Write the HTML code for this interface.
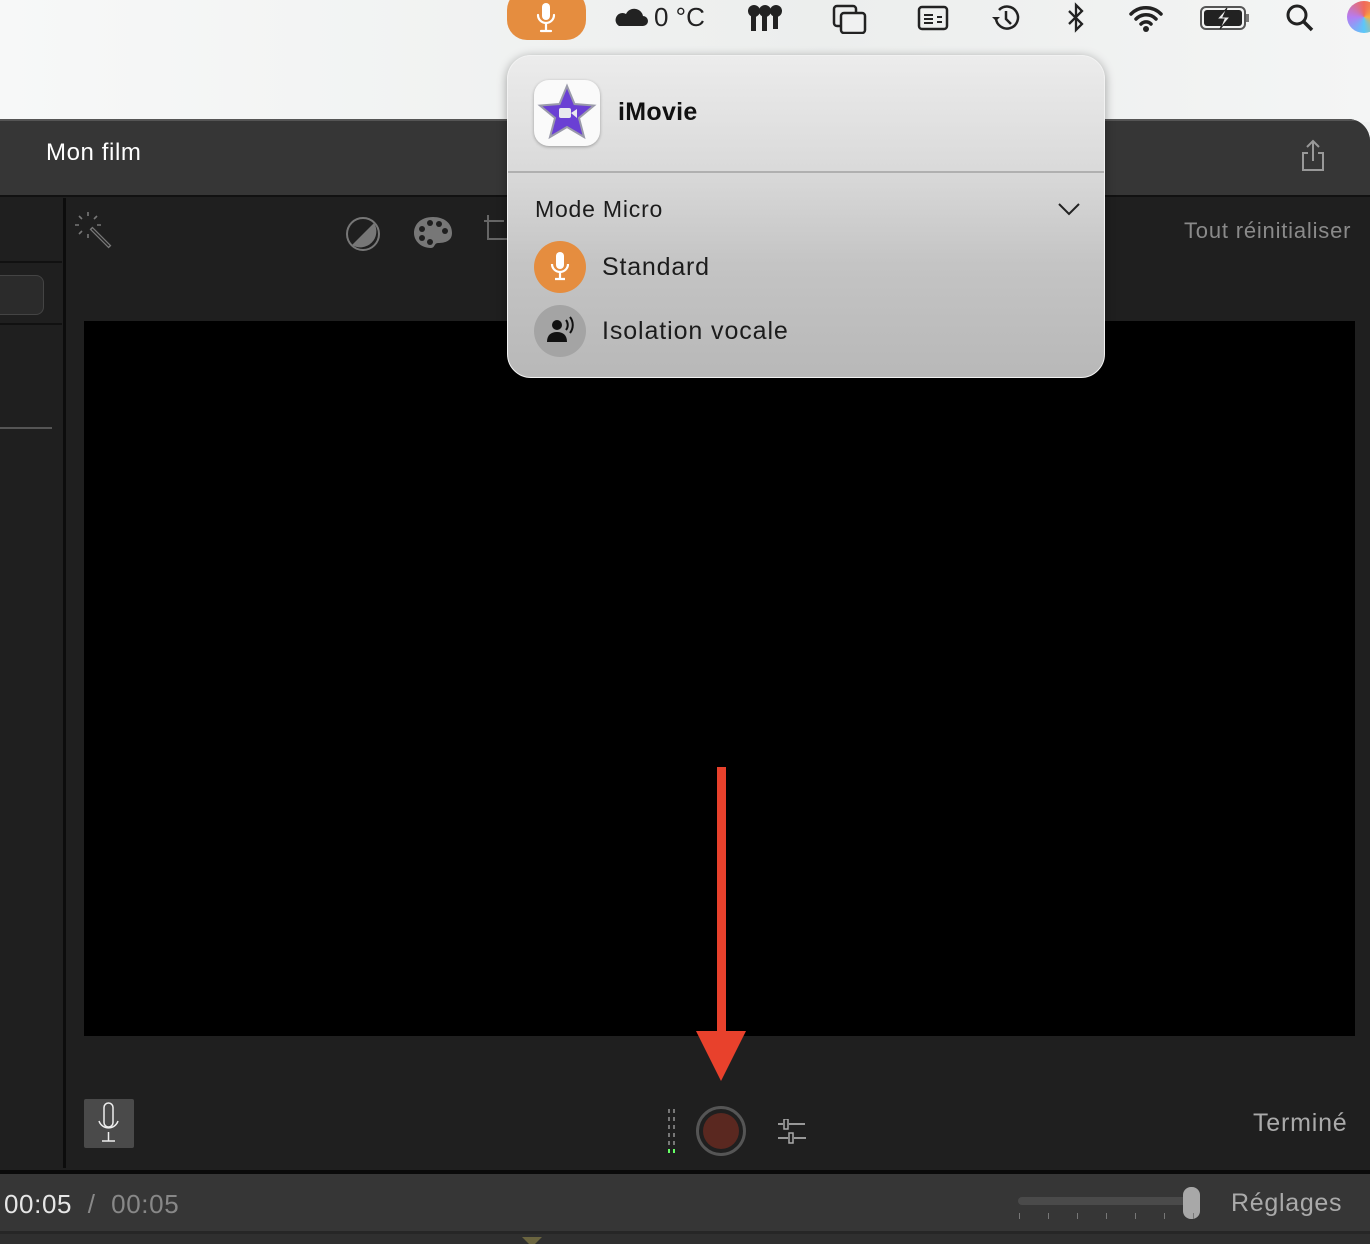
<!DOCTYPE html>
<html><head><meta charset="utf-8"><style>
*{margin:0;padding:0;box-sizing:border-box}
body{width:1370px;height:1244px;overflow:hidden;position:relative;background:#f0f1f1;font-family:"Liberation Sans","DejaVu Sans",sans-serif}
.a{position:absolute}
</style></head><body>
<div class="a" style="left:0;top:0;width:1370px;height:122px;background:linear-gradient(90deg,#f7f8f8,#eceeed 60%,#f4f5f5)"></div>
<div class="a" style="left:507px;top:-10px;width:79px;height:50px;border-radius:20px;background:#e58d3f"></div>
<svg class="a" style="left:533px;top:2px" width="26" height="32" viewBox="0 0 26 32"><rect x="9" y="1" width="8" height="17" rx="4" fill="#fff"/><path d="M5 13a8 8 0 0016 0M13 21v7M8 29h10" stroke="#fff" stroke-width="2.2" fill="none" stroke-linecap="round"/></svg>
<svg class="a" style="left:615px;top:6px" width="34" height="22"><path d="M4 20h24a5 5 0 000-10 9 9 0 00-17-2 6 6 0 00-7 12z" fill="#222"/></svg>
<div class="a" style="left:654px;top:2px;font-size:26px;color:#222">0 °C</div>
<svg class="a" style="left:746px;top:3px" width="38" height="30"><g fill="#222"><circle cx="8" cy="8" r="6"/><circle cx="19" cy="8" r="6"/><circle cx="30" cy="8" r="6"/><rect x="5" y="8" width="5" height="20"/><rect x="16" y="8" width="5" height="20"/><rect x="27" y="8" width="5" height="18"/></g></svg>
<svg class="a" style="left:832px;top:4px" width="36" height="30"><rect x="2" y="2" width="22" height="20" rx="3" fill="none" stroke="#222" stroke-width="2.5"/><rect x="9" y="9" width="24" height="20" rx="3" fill="#f0f1f1" stroke="#222" stroke-width="2.5"/></svg>
<svg class="a" style="left:917px;top:5px" width="32" height="26"><rect x="2" y="2" width="28" height="22" rx="3" fill="none" stroke="#222" stroke-width="2.5"/><path d="M7 10h9M7 14h9M7 18h9M20 12h5M20 17h5" stroke="#222" stroke-width="2"/></svg>
<svg class="a" style="left:990px;top:3px" width="32" height="30"><path d="M6 15a11 11 0 1 0 3-8" fill="none" stroke="#222" stroke-width="2.5"/><path d="M2 14l4 4 4-4z" fill="#222"/><path d="M16 8v8l5 5" stroke="#222" stroke-width="2.5" fill="none"/></svg>
<svg class="a" style="left:1065px;top:2px" width="22" height="32"><path d="M4 9l13 13-6 6V3l6 6L4 22" stroke="#222" stroke-width="2.3" fill="none"/></svg>
<svg class="a" style="left:1128px;top:4px" width="36" height="28"><path d="M3 10a21 21 0 0130 0M8 15a14 14 0 0120 0M13 20a7 7 0 0110 0" stroke="#222" stroke-width="3.5" fill="none" stroke-linecap="round"/><circle cx="18" cy="25" r="3" fill="#222"/></svg>
<svg class="a" style="left:1199px;top:5px" width="52" height="26"><rect x="2" y="2" width="44" height="22" rx="5" fill="none" stroke="#555" stroke-width="2"/><rect x="5" y="5" width="38" height="16" rx="3" fill="#222"/><rect x="47" y="9" width="3" height="8" fill="#777"/><path d="M28 3l-10 11h7l-4 10 10-12h-7z" fill="#eee" stroke="#222" stroke-width="1"/></svg>
<svg class="a" style="left:1285px;top:3px" width="30" height="30"><circle cx="12" cy="12" r="9" fill="none" stroke="#222" stroke-width="3"/><path d="M19 19l8 8" stroke="#222" stroke-width="3.5"/></svg>
<div class="a" style="left:1347px;top:1px;width:34px;height:32px;border-radius:50%;background:conic-gradient(#f06a5a,#f9b23c,#5ac8fa,#b57cf2,#f06a5a)"></div>
<div class="a" style="left:0;top:119px;width:1370px;height:1125px;background:#1f1f1f;border-top-right-radius:22px;overflow:hidden">
 <div class="a" style="left:0;top:0;width:1370px;height:77px;background:#363636;border-top:2px solid #555"></div>
 <div class="a" style="left:0;top:76px;width:1370px;height:2px;background:#111"></div>
 <div class="a" style="left:46px;top:20px;font-size:24px;letter-spacing:0.6px;color:#fff">Mon film</div>
 <svg class="a" style="left:1298px;top:20px" width="30" height="34"><path d="M15 2v20M9 8l6-6 6 6M10 14H5v17h20V14h-5" stroke="#999" stroke-width="2" fill="none"/></svg>
 <div class="a" style="left:1184px;top:99px;font-size:22px;letter-spacing:0.8px;color:#8a8a8a">Tout réinitialiser</div>
 <div class="a" style="left:63px;top:79px;width:3px;height:970px;background:#0c0c0c"></div>
 <div class="a" style="left:0;top:142px;width:62px;height:2px;background:#111"></div>
 <div class="a" style="left:0;top:204px;width:62px;height:2px;background:#111"></div>
 <div class="a" style="left:-10px;top:156px;width:54px;height:40px;border-radius:8px;background:#2b2b2b;border:1px solid #444"></div>
 <div class="a" style="left:0;top:308px;width:52px;height:2px;background:#555"></div>
 <svg class="a" style="left:72px;top:90px" width="42" height="42"><g stroke="#777" stroke-width="1.6"><path d="M16 3v4M16 25v4M3 16h4M25 16h4M7 7l3 3M25 7l-3 3M7 25l3-3"/></g><path d="M19 19l19 19" stroke="#777" stroke-width="4"/><path d="M20 20l17 17" stroke="#222" stroke-width="1.5"/></svg>
 <svg class="a" style="left:344px;top:96px" width="38" height="38"><circle cx="19" cy="19" r="16" fill="none" stroke="#777" stroke-width="2"/><path d="M30 8A16 16 0 0 1 8 30z" fill="#777"/></svg>
 <svg class="a" style="left:412px;top:96px" width="42" height="36"><path d="M21 2C8 2 2 10 2 18s7 15 17 15c4 0 3-5 7-5 7 0 14-2 14-10C40 8 32 2 21 2z" fill="#777"/><g fill="#1f1f1f"><circle cx="10" cy="14" r="3"/><circle cx="18" cy="8" r="3"/><circle cx="27" cy="9" r="3"/><circle cx="10" cy="23" r="3"/><circle cx="18" cy="27" r="3"/><circle cx="33" cy="16" r="3"/></g></svg>
 <svg class="a" style="left:484px;top:96px" width="24" height="30"><path d="M4 0v24h20M0 6h20" stroke="#666" stroke-width="2" fill="none"/></svg>
 <div class="a" style="left:84px;top:202px;width:1271px;height:715px;background:#000"></div>
 <div class="a" style="left:84px;top:980px;width:50px;height:49px;background:#4a4a4a;border-radius:2px"></div>
 <svg class="a" style="left:94px;top:982px" width="30" height="44"><rect x="10" y="2" width="9" height="24" rx="4.5" fill="none" stroke="#eee" stroke-width="1.5"/><path d="M5 20a10 10 0 0019 0M14.5 31v9M8 40h13" stroke="#eee" stroke-width="1.5" fill="none"/></svg>
 <svg class="a" style="left:666px;top:988px" width="14" height="50"><g fill="#777"><rect x="2" y="2" width="2" height="4"/><rect x="7" y="2" width="2" height="4"/><rect x="2" y="10" width="2" height="4"/><rect x="7" y="10" width="2" height="4"/><rect x="2" y="18" width="2" height="4"/><rect x="7" y="18" width="2" height="4"/><rect x="2" y="26" width="2" height="4"/><rect x="7" y="26" width="2" height="4"/><rect x="2" y="34" width="2" height="4"/><rect x="7" y="34" width="2" height="4"/></g><rect x="2" y="42" width="2" height="4" fill="#6f6"/><rect x="7" y="42" width="2" height="4" fill="#6f6"/></svg>
 <div class="a" style="left:696px;top:987px;width:50px;height:50px;border-radius:50%;border:3px solid #555;background:#1f1f1f"></div>
 <div class="a" style="left:703px;top:994px;width:36px;height:36px;border-radius:50%;background:#5a2820"></div>
 <svg class="a" style="left:775px;top:1000px" width="36" height="28"><path d="M3 5h5M14 5h16M3 19h10M19 19h12" stroke="#aaa" stroke-width="1.8"/><rect x="9" y="0" width="4" height="10" fill="none" stroke="#aaa" stroke-width="1.5"/><rect x="14" y="14" width="4" height="10" fill="none" stroke="#aaa" stroke-width="1.5"/></svg>
 <div class="a" style="left:1253px;top:990px;font-size:25px;letter-spacing:0.8px;color:#aaa">Terminé</div>
 <div class="a" style="left:0;top:1051px;width:1370px;height:4px;background:#0a0a0a"></div>
 <div class="a" style="left:0;top:1055px;width:1370px;height:57px;background:#363636"></div>
 <div class="a" style="left:0;top:1112px;width:1370px;height:3px;background:#262626"></div>
 <div class="a" style="left:0;top:1115px;width:1370px;height:10px;background:#2f2f2f"></div>
 <div class="a" style="left:4px;top:1070px;font-size:26px;letter-spacing:0.6px;color:#e6e6e6">00:05 <span style="color:#888">&nbsp;/&nbsp; 00:05</span></div>
 <div class="a" style="left:1018px;top:1078px;width:170px;height:8px;border-radius:4px;background:#4a4a4a"></div>
 <div class="a" style="left:1183px;top:1068px;width:17px;height:32px;border-radius:8px;background:#a8a8a8"></div>
 <div class="a" style="left:1019px;top:1094px;width:180px;height:6px;background:repeating-linear-gradient(90deg,#777 0 1px,transparent 1px 29px)"></div>
 <div class="a" style="left:1231px;top:1070px;font-size:25px;letter-spacing:0.7px;color:#aaa">Réglages</div>
 <div class="a" style="left:522px;top:1118px;width:0;height:0;border-left:10px solid transparent;border-right:10px solid transparent;border-top:10px solid #6b6540"></div>
</div>
<div class="a" style="left:717px;top:767px;width:9px;height:270px;background:#e8412c"></div>
<div class="a" style="left:696px;top:1031px;width:0;height:0;border-left:25px solid transparent;border-right:25px solid transparent;border-top:50px solid #e8412c"></div>
<div class="a" style="left:507px;top:55px;width:598px;height:323px;border-radius:24px;background:linear-gradient(180deg,#ececec 0%,#dadada 35%,#c4c4c4 65%,#b8b8b8 100%);border:1.5px solid #f2f2f2;box-shadow:0 2px 10px rgba(0,0,0,.35);overflow:hidden">
 <div class="a" style="left:26px;top:24px;width:66px;height:66px;border-radius:15px;background:#fafafa;box-shadow:0 1px 3px rgba(0,0,0,.3)"></div>
 <svg class="a" style="left:28px;top:26px" width="62" height="62" viewBox="0 0 62 62"><path d="M31 4l7.5 18 19.5 1.5-15 12.5 5 19L31 45 14 55l5-19L4 23.5 23.5 22z" fill="#6a3fd4" stroke="#9a9aaa" stroke-width="2"/><rect x="23" y="26" width="12" height="10" rx="2" fill="#e8e8ee"/><path d="M35 31l6-4v9z" fill="#e8e8ee"/></svg>
 <div class="a" style="left:110px;top:42px;font-size:25px;font-weight:bold;letter-spacing:0.3px;color:#111">iMovie</div>
 <div class="a" style="left:0;top:115px;width:598px;height:2px;background:#b0b0b0"></div>
 <div class="a" style="left:27px;top:140px;font-size:23px;letter-spacing:0.8px;color:#1c1c1c">Mode Micro</div>
 <svg class="a" style="left:549px;top:145px" width="24" height="16"><path d="M2 3l10 10 10-10" stroke="#222" stroke-width="2" fill="none"/></svg>
 <div class="a" style="left:26px;top:185px;width:52px;height:52px;border-radius:50%;background:#e58d3f"></div>
 <svg class="a" style="left:39px;top:194px" width="26" height="34"><rect x="9" y="2" width="8" height="17" rx="4" fill="#fff"/><path d="M5 14a8 8 0 0016 0M13 22v6M8 29h10" stroke="#fff" stroke-width="2.2" fill="none"/></svg>
 <div class="a" style="left:94px;top:197px;font-size:25px;letter-spacing:0.8px;color:#1c1c1c">Standard</div>
 <div class="a" style="left:26px;top:249px;width:52px;height:52px;border-radius:50%;background:#a4a4a4"></div>
 <svg class="a" style="left:37px;top:260px" width="32" height="30"><circle cx="12" cy="9" r="5" fill="#111"/><path d="M2 26c0-7 4-10 10-10s10 3 10 10z" fill="#111"/><path d="M21 4a8 8 0 010 10M25 1a13 13 0 010 16" stroke="#111" stroke-width="2" fill="none"/></svg>
 <div class="a" style="left:94px;top:261px;font-size:25px;letter-spacing:0.9px;color:#1c1c1c">Isolation vocale</div>
</div>
</body></html>
